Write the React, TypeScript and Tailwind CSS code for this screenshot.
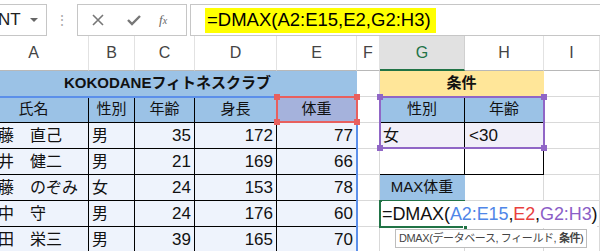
import React from "react";

const GRID = "border-[#d9d9d9]";

type CellProps = {
  children?: React.ReactNode;
  className?: string;
};

function Cell({ children, className = "" }: CellProps) {
  return (
    <div className={`flex items-center overflow-hidden whitespace-nowrap border-r border-b ${className}`}>
      {children}
    </div>
  );
}

const members = [
  { name: "佐藤　直己", sex: "男", age: 35, h: 172, w: 77 },
  { name: "今井　健二", sex: "男", age: 21, h: 169, w: 66 },
  { name: "加藤　のぞみ", sex: "女", age: 24, h: 153, w: 78 },
  { name: "田中　守", sex: "男", age: 24, h: 176, w: 60 },
  { name: "山田　栄三", sex: "男", age: 39, h: 165, w: 70 },
];

function Handle({ className }: { className: string }) {
  return <div className={`absolute w-[6px] h-[6px] ${className}`} />;
}

export default function App() {
  const cols = ["A", "B", "C", "D", "E", "F", "G", "H", "I"];

  return (
    <div className="w-[600px] h-[251px] overflow-hidden bg-white text-[16px] text-[#111] font-['Liberation_Sans','Noto_Sans_CJK_JP',sans-serif]">
      {/* formula bar */}
      <div className="flex h-[36px] items-start pt-[4px]">
        <div className="w-[47px] h-[32px] border border-l-0 border-[#c6c6c6] flex items-center pl-[1px] shrink-0">
          <span className="text-[17px] text-[#222] -ml-[3px]">NT</span>
          <span className="ml-[9px] w-0 h-0 border-l-[4px] border-r-[4px] border-t-[4px] border-l-transparent border-r-transparent border-t-[#666]" />
        </div>
        <div className="w-[30px] h-[32px] flex items-center justify-center text-[#aaa] text-[14px] shrink-0">⋮</div>
        <div className="w-[110px] h-[32px] border border-[#c6c6c6] flex items-center shrink-0 text-[#777]">
          <svg width="36" height="20" viewBox="0 0 36 20" className="ml-[2px]">
            <path d="M13 5 L23 15 M23 5 L13 15" stroke="#777" strokeWidth="1.6" fill="none" />
          </svg>
          <svg width="36" height="20" viewBox="0 0 36 20">
            <path d="M12 10 L16 14 L24 6" stroke="#777" strokeWidth="2.4" fill="none" />
          </svg>
          <span className="ml-[7px] text-[13px] italic font-['Liberation_Serif',serif] text-[#666]">
            f<span className="text-[10px]">x</span>
          </span>
        </div>
        <div className="flex-1 h-[32px] ml-[3px] border border-r-0 border-[#c6c6c6] flex items-center pl-[14px]">
          <span className="bg-[#ffff00] h-[25px] w-[231px] flex items-center pl-[2px] text-[18.5px] text-black">
            =DMAX(A2:E15,E2,G2:H3)
          </span>
        </div>
      </div>

      {/* sheet */}
      <div className="relative grid grid-cols-[89px_46px_60px_82px_80px_23px_85px_79px_56px] grid-rows-[35px_repeat(7,26px)]">
        {cols.map((c) => (
          <Cell
            key={c}
            className={`justify-center text-[16px] ${
              c === "G"
                ? "bg-[#e1e1e1] text-[#217346] border-b-2 border-b-[#217346] border-r-[#d0d0d0]"
                : `text-[#444] border-r-[#e2e2e2] border-b-[#b8b8b8] ${c === "A" ? "pr-[21px]" : ""}`
            }`}
          >
            {c}
          </Cell>
        ))}

        {/* row 1 */}
        <Cell className="col-span-5 justify-center pr-[21px] bg-[#9bc2e6] border-[#9bc2e6] font-bold text-[15px]">
          KOKODANEフィトネスクラブ
        </Cell>
        <Cell className={GRID} />
        <Cell className="col-span-2 justify-center bg-[#ffe699] border-[#ffe699] font-bold text-[15px]">条件</Cell>
        <Cell className={GRID} />

        {/* row 2 headers */}
        <Cell className="justify-center pr-[21px] bg-[#9bc2e6] border-black text-[15px]">氏名</Cell>
        <Cell className="justify-center bg-[#9bc2e6] border-black text-[15px]">性別</Cell>
        <Cell className="justify-center bg-[#9bc2e6] border-black text-[15px]">年齢</Cell>
        <Cell className="justify-center bg-[#9bc2e6] border-black text-[15px]">身長</Cell>
        <Cell className="justify-center bg-[#a5b2dc] border-black text-[15px]">体重</Cell>
        <Cell className={GRID} />
        <Cell className="justify-center bg-[#9bc2e6] border-black text-[15px]">性別</Cell>
        <Cell className="justify-center bg-[#9bc2e6] border-black text-[15px]">年齢</Cell>
        <Cell className={GRID} />

        {members.map((m, i) => (
          <React.Fragment key={m.name}>
            <Cell className="bg-[#eef3fc] border-black text-[16px]">
              <span className="-ml-[18px]">{m.name}</span>
            </Cell>
            <Cell className="bg-[#eef3fc] border-black pl-[3px]">{m.sex}</Cell>
            <Cell className="bg-[#eef3fc] border-black justify-end pr-[3px] text-[17px]">{m.age}</Cell>
            <Cell className="bg-[#eef3fc] border-black justify-end pr-[3px] text-[17px]">{m.h}</Cell>
            <Cell className="bg-[#eef3fc] border-black justify-end pr-[3px] text-[17px]">{m.w}</Cell>
            <Cell className={GRID} />
            {i === 0 && (
              <>
                <Cell className="bg-[#f1eff9] border-black pl-[3px]">女</Cell>
                <Cell className="bg-[#f1eff9] border-black pl-[4px] text-[17px]">&lt;30</Cell>
              </>
            )}
            {i === 1 && (
              <>
                <Cell className="border-black" />
                <Cell className="border-black" />
              </>
            )}
            {i === 2 && (
              <>
                <Cell className="justify-center bg-[#9bc2e6] border-[#9bc2e6] border-b-[#d9d9d9] text-[15px]">MAX体重</Cell>
                <Cell className={GRID} />
              </>
            )}
            {i === 3 && (
              <>
                <Cell className="overflow-visible relative z-10 border-r-0 border-b-0 border-l-2 border-t-2 border-[#217346] -ml-[1px] -mt-[1px] pl-[1px]">
                  <span className="text-[18px] tracking-[-0.1px] bg-white">
                    =DMAX(<span className="text-[#4f86e8]">A2:E15</span>,<span className="text-[#e8403e]">E2</span>,<span className="text-[#8b5ec7]">G2:H3</span>)
                  </span>
                </Cell>
                <Cell className={GRID} />
              </>
            )}
            {i === 4 && (
              <>
                <Cell className={GRID} />
                <Cell className={GRID} />
              </>
            )}
            <Cell className={GRID} />
          </React.Fragment>
        ))}

        {/* blue range A2:E15 */}
        <div className="absolute left-0 top-[60px] w-[358px] h-[2px] bg-[#5b8fea]" />
        <div className="absolute left-[356px] top-[60px] w-[2px] h-[160px] bg-[#5b8fea]" />

        {/* red E2 */}
        <div className="absolute left-[276px] top-[60px] w-[82px] h-[27px] border-2 border-[#e8605e]" />
        <Handle className="left-[274px] top-[58px] bg-[#e8605e]" />
        <Handle className="left-[354px] top-[58px] bg-[#e8605e]" />
        <Handle className="left-[274px] top-[83px] bg-[#e8605e]" />
        <Handle className="left-[354px] top-[83px] bg-[#e8605e]" />

        {/* purple G2:H3 */}
        <div className="absolute left-[379px] top-[60px] w-[166px] h-[53px] border-2 border-[#9066c6]" />
        <Handle className="left-[377px] top-[58px] bg-[#9066c6]" />
        <Handle className="left-[541px] top-[58px] bg-[#9066c6]" />
        <Handle className="left-[377px] top-[109px] bg-[#9066c6]" />
        <Handle className="left-[541px] top-[109px] bg-[#9066c6]" />

        {/* active cell bottom + fill handle */}
        <div className="absolute left-[379px] top-[190px] w-[87px] h-[2px] bg-[#217346] z-20" />
        <div className="absolute left-[463px] top-[189px] w-[5px] h-[5px] bg-[#217346] border border-white z-20" />

        {/* tooltip */}
        <div className="absolute left-[395px] top-[193px] h-[19px] px-[3px] bg-white border border-[#bdbdbd] z-30 flex items-center text-[11px] tracking-[-0.4px] text-[#444] whitespace-nowrap">
          <span>
            DMAX(データベース, フィールド, <b className="font-bold">条件</b>)
          </span>
        </div>
      </div>
    </div>
  );
}
